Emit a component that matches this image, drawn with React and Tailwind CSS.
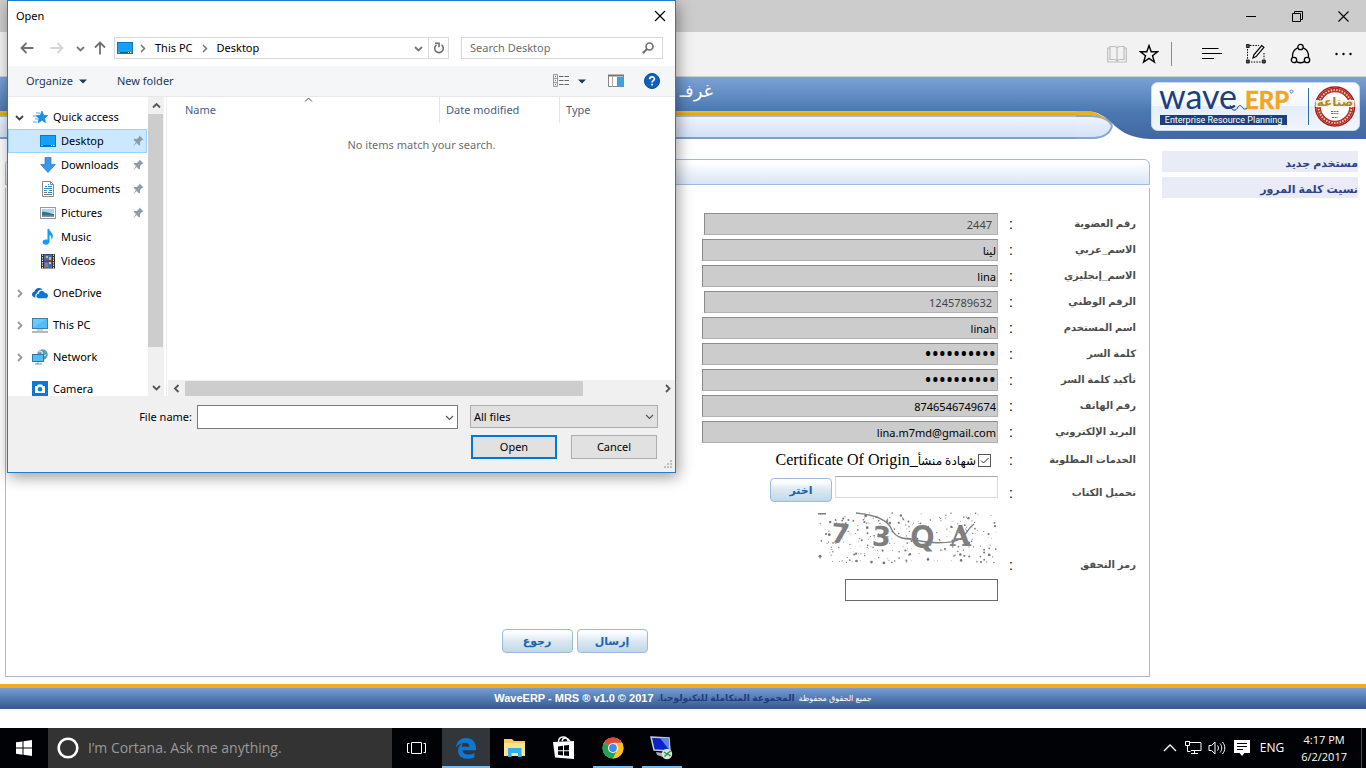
import React from "react";

const UI = "font-['Noto_Sans','DejaVu_Sans',sans-serif]";
const TASK_UI = "font-['Open_Sans','DejaVu_Sans',sans-serif]";
const ARABIC = "font-['Liberation_Sans','DejaVu_Sans',sans-serif]";

function Svg({ w = 16, h = 16, className = "", children }) {
  return (
    <svg width={w} height={h} viewBox={`0 0 ${w} ${h}`} className={`shrink-0 ${className}`} fill="none" aria-hidden="true">
      {children}
    </svg>
  );
}

/* ---------- browser frame ---------- */

function TitleBar() {
  return (
    <div className="flex h-8 items-center justify-end bg-[#cccccc]">
      <button aria-label="Minimize" className="flex h-8 w-[46px] items-center justify-center">
        <Svg w={10} h={10}><path d="M0 5.5h10" stroke="#000" /></Svg>
      </button>
      <button aria-label="Restore" className="flex h-8 w-[46px] items-center justify-center">
        <Svg w={11} h={11}><path d="M.5 2.5h8v8h-8zM2.500 2.500v-2h8v8h-2" stroke="#000" /></Svg>
      </button>
      <button aria-label="Close" className="flex h-8 w-[46px] items-center justify-center">
        <Svg w={11} h={11}><path d="M.5.5l10 10M10.500.5l-10 10" stroke="#000" strokeWidth="1.100" /></Svg>
      </button>
    </div>
  );
}

function BrowserBar() {
  return (
    <div className="flex h-[45px] items-center justify-end border-b border-[#d0d0d0] bg-[#f2f2f2] pr-[13px]">
      <button aria-label="Reading view" className="mr-3">
        <Svg w={20} h={20}>
          <path d="M10 3.500V17M10 3.500C9 2.500 7.500 2.500 6 2.500H3v13h4c1.500 0 2.500.5 3 1.500.5-1 1.500-1.500 3-1.500h4v-13h-3c-1.500 0-3 0-4 1z M3 4H.7v14h18.600V4H17" stroke="#bdbdbd" strokeWidth="1.200" />
        </Svg>
      </button>
      <button aria-label="Add to favorites" className="mr-3">
        <Svg w={20} h={20}>
          <path d="M10 1.600l2.200 6.100 6.400.1-5.100 4 1.900 6.300L10 14.400l-5.400 3.700 1.900-6.300-5.100-4 6.400-.1z" stroke="#000" strokeWidth="1.400" />
        </Svg>
      </button>
      <div className="mr-[30px] h-6 w-px bg-[#8c8c8c]" />
      <button aria-label="Hub" className="mr-6">
        <Svg w={20} h={20}><path d="M0 4.500h16.500M0 9.500h20M0 14.500h12" stroke="#000" strokeWidth="1.200" /></Svg>
      </button>
      <button aria-label="Make a web note" className="mr-6">
        <Svg w={20} h={20}>
          <path d="M4 1.500h9M1.500 5v10M18 9v6M5 18h10" stroke="#000" strokeDasharray="1.500 1.200" />
          <path d="M.3.5h3v3h-3zM.3 16h3v3h-3zM16.300 16h3v3h-3z" fill="#555" stroke="#000" strokeWidth=".8" />
          <path d="M7 14l.9-3.200L15.700 1.600l2.200 1.800-7.800 9.200z" fill="#f2f2f2" stroke="#000" strokeWidth="1.200" />
        </Svg>
      </button>
      <button aria-label="Share" className="mr-6">
        <Svg w={21} h={22}>
          <circle cx="10.500" cy="4" r="2.700" stroke="#000" strokeWidth="1.300" />
          <circle cx="4" cy="17" r="2.700" stroke="#000" strokeWidth="1.300" />
          <circle cx="17" cy="17" r="2.700" stroke="#000" strokeWidth="1.300" />
          <path d="M7.700 4.800C4 6.500 2 10 2.500 14.400M13.300 4.800c3.700 1.700 5.700 5.200 5.200 9.600M6.500 18.600c2.500 1.400 5.500 1.400 8 0" stroke="#000" strokeWidth="1.300" />
        </Svg>
      </button>
      <button aria-label="More">
        <Svg w={18} h={20}>
          <circle cx="1.500" cy="10" r="1.200" fill="#000" /><circle cx="8.500" cy="10" r="1.200" fill="#000" /><circle cx="15.500" cy="10" r="1.200" fill="#000" />
        </Svg>
      </button>
    </div>
  );
}

/* ---------- page ---------- */

function WaveLogo() {
  return (
    <svg width="209" height="49" viewBox="0 0 209 49" className="overflow-visible" role="img" aria-label="wave ERP Enterprise Resource Planning">
      <defs>
        <linearGradient id="card" x1="0" y1="0" x2="0" y2="1">
          <stop offset="0" stopColor="#fff" /><stop offset=".48" stopColor="#f4f8fd" /><stop offset=".5" stopColor="#e3edf9" /><stop offset="1" stopColor="#f1f6fd" />
        </linearGradient>
      </defs>
      <rect x=".5" y=".5" width="208" height="48" rx="6" fill="url(#card)" stroke="#c9daf0" />
      <text x="8" y="27" fontSize="34" fontFamily="Lato, sans-serif" fill="#1d3f7c">wave</text>
      <path d="M79 23c2 7 6 6 8 2 2-3 3-1 5 1 1 1.500 2 1.500 4 0" stroke="#1d3f7c" strokeWidth="1" fill="none" />
      <text x="94" y="27" fontSize="24" fontWeight="700" fontFamily="Lato, sans-serif" fill="#f2a51f" stroke="#f2a51f" strokeWidth=".5">ERP</text>
      <circle cx="140.500" cy="9.500" r="1.500" stroke="#3a6ca8" strokeWidth=".8" fill="none" />
      <rect x="9" y="33" width="127" height="10" fill="#1d3f7c" />
      <text x="72.500" y="41" fontSize="9" textAnchor="middle" fontFamily="Roboto, sans-serif" fill="#fff">Enterprise Resource Planning</text>
      <path d="M157.500 6v37" stroke="#2f6ea8" />
      <circle cx="184" cy="24.500" r="19.500" fill="#fff" stroke="#a51d1d" strokeWidth="1.500" />
      <circle cx="184" cy="24.500" r="16.500" stroke="#b5322c" strokeWidth="4.500" fill="none" />
      <circle cx="184" cy="24.500" r="16.500" stroke="#efc9a8" strokeWidth="1.800" strokeDasharray="1.500 1.300" fill="none" />
      <rect x="164.500" y="18" width="39" height="7" fill="#f8f3e6" />
      <text x="184" y="24" fontSize="12" fontWeight="700" textAnchor="middle" fontFamily="DejaVu Sans, sans-serif" fill="#a98a2c">صناعة</text>
      <path d="M180 29.500h8M180 31.500h8M181 35.500h6" stroke="#b5563a" strokeDasharray="2 .7" />
    </svg>
  );
}

function SiteHeader() {
  return (
    <header className="flex h-[63px]">
      <div className="min-w-0 flex-1">
        <div className="flex h-[34px] items-start justify-end bg-gradient-to-b from-[#7ba2d6] to-[#4c79b3] pr-[363px]">
          <span dir="rtl" className="font-['DejaVu_Sans',sans-serif] text-lg text-white">غرفـ</span>
        </div>
        <div className="h-1 bg-gradient-to-b from-[#f2c218] to-[#dba11d]" />
        <div className="h-6 border-y-2 border-t-[#9db9e0] border-b-[#7d9fcd] bg-gradient-to-b from-[#eef4fc] via-[#dfe9f8] to-[#d3e2f7]" />
      </div>
      <svg width="74" height="63" viewBox="0 0 74 63" className="shrink-0" aria-hidden="true">
        <defs>
          <linearGradient id="hb" gradientUnits="userSpaceOnUse" x1="0" y1="0" x2="0" y2="62">
            <stop offset="0" stopColor="#7ba2d6" /><stop offset=".55" stopColor="#4c79b3" /><stop offset="1" stopColor="#41679f" />
          </linearGradient>
          <linearGradient id="pill" x1="0" y1="0" x2="0" y2="1">
            <stop offset="0" stopColor="#eef4fc" /><stop offset="1" stopColor="#d3e2f7" />
          </linearGradient>
        </defs>
        <path d="M0 39h14c12 0 20 4 22 10-2 8-10 12-18 12H0" fill="url(#pill)" stroke="#86a7d4" strokeWidth="2" />
        <path d="M0 34h9c14 0 20 7 28 15-7-7-14-11-24-11H0z" fill="#e8b01b" />
        <path d="M0 0h74v62c-18-1-27-6-35-13C30 40 22 34 9 34H0z" fill="url(#hb)" />
      </svg>
      <div className="flex h-[62px] w-[216px] shrink-0 items-start bg-gradient-to-b from-[#7ba2d6] via-[#4c79b3] to-[#41679f] pt-[5px] pl-px">
        <WaveLogo />
      </div>
    </header>
  );
}

const FIELDS = [
  { id: "member", label: "رقم العضوية", value: "2447", inset: true },
  { id: "name-ar", label: "الاسم_عربي", value: "لينا" },
  { id: "name-en", label: "الاسم_إنجليزي", value: "lina" },
  { id: "national", label: "الرقم الوطني", value: "1245789632", inset: true },
  { id: "user", label: "اسم المستخدم", value: "linah" },
  { id: "pass", label: "كلمة السر", value: "lina123456", type: "password" },
  { id: "pass2", label: "تأكيد كلمة السر", value: "lina123456", type: "password" },
  { id: "phone", label: "رقم الهاتف", value: "8746546749674" },
  { id: "email", label: "البريد الإلكتروني", value: "lina.m7md@gmail.com" },
];

function Row({ id, label, children, className = "" }) {
  return (
    <div className={`grid grid-cols-[122px_16px_1fr] items-center ${className}`}>
      <label htmlFor={id} className={`${ARABIC} whitespace-nowrap text-[10px] leading-4 font-bold text-[#4d4d4d]`}>{label}</label>
      <span className={`${ARABIC} pr-px text-sm leading-4 text-black`}>:</span>
      {children}
    </div>
  );
}

function PageButton({ children, className = "w-[71px]" }) {
  return (
    <button className={`${ARABIC} ${className} h-6 rounded border border-[#9dbbe0] bg-gradient-to-b from-[#fafcfe] from-15% via-[#dbe8f1] via-50% to-[#c2d8e6] text-[11px] leading-5 font-bold text-[#1a64b0]`}>
      {children}
    </button>
  );
}

function dots() {
  const out = [];
  let s = 37;
  const next = () => {
    s = (s * 16807) % 2147483647;
    return s / 2147483647;
  };
  for (let i = 0; i < 270; i++) {
    out.push({ x: 2 + next() * 176, y: next() * 50, r: 0.4 + next() * next() * 1.2 });
  }
  return out;
}

const NOISE = dots();

function Captcha() {
  return (
    <svg width="180" height="50" viewBox="0 0 180 50" className="overflow-visible [direction:ltr]" role="img" aria-label="73QA">
      {NOISE.map((d, i) => <circle key={i} cx={d.x} cy={d.y} r={d.r} fill="#777" />)}
      <g fill="#7f7f7f" fontFamily="DejaVu Sans, sans-serif" fontWeight="700">
        <text x="13" y="30" fontSize="27" transform="rotate(6 22 20)">7</text>
        <text x="54" y="33" fontSize="27" transform="rotate(4 65 24)">3</text>
        <text x="93" y="34" fontSize="29" fontWeight="400" stroke="#7f7f7f" strokeWidth="2">Q</text>
        <text x="132" y="33" fontSize="27" fontFamily="DejaVu Serif, serif">A</text>
      </g>
      <path d="M0 .8h8M38 0c22 2 33 9 36 17 4 8 12 9 21 9 15 5 38 5 47 0 6-3 7-10 14-15" stroke="#7f7f7f" strokeWidth="1.400" fill="none" />
    </svg>
  );
}

function RegistrationForm() {
  return (
    <main className="min-w-0 flex-1 pt-[19px]">
      <div className="h-[26px] rounded-t-md border border-[#9dbbe0] bg-gradient-to-b from-white from-10% via-[#e9f0fa] via-60% to-[#d9e6f7]" />
      <form className="mt-[3px] flex flex-col border border-t-0 border-[#a6b9d8] pt-[25px] pr-[13px] pb-[23px] pl-[7px]" onSubmit={(e) => e.preventDefault()}>
        <div className="flex flex-col gap-1">
          {FIELDS.map((f) => (
            <Row key={f.id} id={f.id} label={f.label}>
              <input
                id={f.id}
                type={f.type || "text"}
                defaultValue={f.value}
                className={`${UI} h-[22px] border border-t-[#8c8c8c] border-r-[#b0b0b0] border-b-[#b0b0b0] border-l-[#8c8c8c] bg-[#cccccc] text-right outline-none ${f.type ? "text-[19px]" : "text-[11px]"} ${f.inset ? "w-[294px] px-[5px] text-[#444]" : "w-[296px] px-px text-black"}`}
              />
            </Row>
          ))}
        </div>
        <Row id="cert" label="الخدمات المطلوبة" className="mt-1 h-[26px]">
          <div className="flex items-center gap-0.5 pr-[7px]">
            <span className="relative flex h-[13px] w-[13px]">
              <input id="cert" type="checkbox" defaultChecked className="h-[13px] w-[13px] appearance-none border border-[#555] bg-white" />
              <Svg w={13} h={13} className="pointer-events-none absolute inset-0"><path d="M3 6.500l2.500 2.500L10.500 4" stroke="#333" /></Svg>
            </span>
            <label htmlFor="cert" className="font-['Liberation_Serif','DejaVu_Sans',serif] text-base leading-6 whitespace-nowrap text-black">
              <span className="text-xs">شهادة منشأ</span>_Certificate Of Origin
            </label>
          </div>
        </Row>
        <Row id="file" label="تحميل الكتاب" className="mt-[3px] h-[33px]">
          <div className="flex gap-[3px] self-start">
            <input id="file" type="text" className="h-[22px] w-[163px] border border-t-[#a8a8b4] border-[#d8dae3] bg-white outline-none" />
            <PageButton className="mt-0.5 w-[62px]">اختر</PageButton>
          </div>
        </Row>
        <Row id="code" label="رمز التحقق" className="mt-1 [&>label]:pt-4 [&>span]:pt-4">
          <div className="flex flex-col items-start gap-4">
            <Captcha />
            <input id="code" type="text" className="h-[22px] w-[153px] border border-[#6b6b6b] bg-white outline-none" />
          </div>
        </Row>
        <div className="mt-7 flex justify-center gap-1">
          <PageButton>إرسال</PageButton>
          <PageButton>رجوع</PageButton>
        </div>
      </form>
    </main>
  );
}

function Sidebar() {
  const link = `${ARABIC} block h-[21px] bg-[#e9ebf6] text-[11px] leading-6 font-bold text-[#2d458c]`;
  return (
    <nav className="mr-2 ml-3 flex w-[196px] shrink-0 flex-col gap-[5px] pt-[11px]">
      <a href="#new" className={link}>مستخدم جديد</a>
      <a href="#forgot" className={link}>نسيت كلمة المرور</a>
    </nav>
  );
}

function SiteFooter() {
  return (
    <footer dir="rtl" className={`${ARABIC} mt-[7px] flex h-[25px] items-center justify-center gap-1 border-t-4 border-[#efab22] bg-gradient-to-b from-[#769ed4] to-[#34598f] text-[11px] whitespace-nowrap text-white`}>
      <span className="text-[8px]">جميع الحقوق محفوظة</span>
      <a href="#company" className="text-[9px] font-bold text-[#233a80]">المجموعة المتكاملة للتكنولوجيا.</a>
      <span dir="ltr" className="font-bold">WaveERP - MRS ® v1.0 © 2017</span>
    </footer>
  );
}

/* ---------- file dialog ---------- */

function Chevron({ dir = "down", color = "#555", size = 9, weight = 1.5 }) {
  const d = {
    down: "M1 3l3.500 3.500L8 3",
    up: "M1 6.500L4.500 3 8 6.500",
    right: "M3 1l3.500 3.500L3 8",
    left: "M6.500 1L3 4.500 6.500 8",
  }[dir];
  return (
    <svg width={size} height={size} viewBox="0 0 9 9" fill="none" className="shrink-0" aria-hidden="true">
      <path d={d} stroke={color} strokeWidth={weight} />
    </svg>
  );
}

const ICONS = {
  star: (
    <Svg>
      <path d="M10 2l1.600 4.300 4.200.2-3.200 2.800.9 4.500L10 11.300l-4 2.600 1-4.500-3-2.900 4.200-.2z" fill="#1e90e0" stroke="#1676c4" strokeWidth=".6" />
      <path d="M4 4h4M1 7h4M3 10h3M1 13h4" stroke="#4aaef0" />
    </Svg>
  ),
  desktop: (
    <Svg>
      <rect x=".5" y="2.500" width="15" height="11" fill="#14a0ff" stroke="#0d78bd" />
      <path d="M1 12.500h14" stroke="#075e9c" /><path d="M11 12.500h1M13 12.500h1.500M1.500 12.500h1" stroke="#fff" />
    </Svg>
  ),
  downloads: (
    <Svg><path d="M5 .5h6v7h4.300L8 15.500.7 7.500H5z" fill="#3d97e6" stroke="#2b7fd0" strokeWidth=".8" /></Svg>
  ),
  documents: (
    <Svg>
      <path d="M2.500.5h8l3 3v12h-11z" fill="#fff" stroke="#8a8a8a" /><path d="M10.500.5v3h3" stroke="#8a8a8a" />
      <path d="M5 5.500h2M8 3.500h1M8 5.500h4M4 7.500h8M4 9.500h3M9 9.500h3M8 11.500h4" stroke="#2a8bd8" /><path d="M4 11.500h3M4 13.500h8" stroke="#777" />
    </Svg>
  ),
  pictures: (
    <Svg>
      <rect x=".5" y="2.500" width="15" height="11" fill="#fff" stroke="#9a9a9a" />
      <path d="M2 4h12v4H2z" fill="#a9d3f5" /><path d="M2 7c3-1 6 1 12 2v3H2z" fill="#3f6f7c" /><path d="M2 10.500h12V12H2z" fill="#6f9fc0" />
    </Svg>
  ),
  music: (
    <Svg>
      <path d="M7.500 0h1.700c.3 2.600 4 3.800 3.700 7.500-.2 1.500-.8 2.500-1.600 3.500.5-2.500.2-4-1.800-5v6.500c0 2-1.600 3.200-3.700 3.200S2.500 14.500 2.500 13s1.400-2.600 3.400-2.600c.6 0 1.200.1 1.600.3z" fill="#129cf3" />
    </Svg>
  ),
  videos: (
    <Svg>
      <rect x="1" y="1" width="14" height="14.500" fill="#333" />
      <rect x="4" y="1.500" width="8" height="6" fill="#3c70c8" /><rect x="4" y="8.500" width="8" height="6.500" fill="#3c70c8" />
      <path d="M4 6.500h8v1H4z" fill="#b5462c" /><path d="M6 3h2v2H6zM9 4h2v3H9z" fill="#e8b93a" /><path d="M5 10h3v4H5z" fill="#d2692d" /><path d="M9 9h2v2H9z" fill="#e5cf4c" />
      <path d="M2.500 1.500v14M13.500 1.500v14" stroke="#ddd" strokeDasharray="1.500 1" />
    </Svg>
  ),
  onedrive: (
    <Svg>
      <path d="M3.500 12.500C1.500 12.500 0 11.300 0 9.600 0 8 1 6.900 2.500 6.600 3 4 5 2.700 7.200 2.900c1.500.1 2.600.8 3.300 1.900C7.500 4.300 5.600 6 5.200 8.200 3.600 8.700 3 10.600 3.500 12.500z" fill="#0a6fc9" />
      <path d="M6.700 13.300c-2.700 0-3.300-4 .1-4.500C7 5.300 11.500 4.500 12.800 7.900c2-.1 3.200 1.100 3.200 2.800 0 1.500-1.100 2.600-2.500 2.600z" fill="#0a78d8" />
    </Svg>
  ),
  pc: (
    <Svg>
      <rect x=".5" y="1.500" width="15" height="10" fill="#4fbdfb" stroke="#3f7fa6" /><path d="M1 11V2h13z" fill="#7dd0ff" opacity=".6" />
      <path d="M5 13h6" stroke="#8fa3b0" /><path d="M0 15h16" stroke="#7d97a8" strokeWidth="1.300" />
    </Svg>
  ),
  network: (
    <Svg>
      <circle cx="10.500" cy="5.500" r="5.300" fill="#5f9db5" /><path d="M7 3c2-2 4 0 3 2s2 2 4 1" stroke="#cfe8f0" strokeWidth="1.300" />
      <rect x=".5" y="5.500" width="11" height="7" fill="#4fbdfb" stroke="#2e78a8" /><path d="M3 15h7M6 13v2" stroke="#7d97a8" />
    </Svg>
  ),
  camera: (
    <Svg>
      <rect width="16" height="16" fill="#0a78d8" /><path d="M3 5h2l1-1.500h4L11 5h2v7H3z" fill="#fff" /><circle cx="8" cy="8.300" r="2.200" fill="#0a78d8" />
    </Svg>
  ),
};

function Pin() {
  return (
    <Svg w={12} h={12}><path d="M7.500.5l4 4-1.500.5-2 2 .2 2.500-1 1-2.500-2.500L1 11.500 4 7 1.500 4.800l1-1L5 4l2-2z" fill="#8f9ba6" /></Svg>
  );
}

function TreeItem({ icon, text, pinned, selected }) {
  return (
    <li className={`flex h-6 items-center border pr-0.5 pl-[31px] ${selected ? "border-[#99d1ff] bg-[#cce8ff]" : "border-transparent"}`}>
      {ICONS[icon]}
      <span className="ml-[5px] flex-1">{text}</span>
      {pinned && <Pin />}
    </li>
  );
}

function TreeGroup({ icon, text, arrow, children }) {
  return (
    <li>
      <div className="flex h-6 items-center pl-[7px]">
        <span className="flex w-[17px]">{arrow && <Chevron dir={arrow} color={arrow === "down" ? "#404040" : "#999"} weight={1.800} />}</span>
        {ICONS[icon]}
        <span className="ml-[5px]">{text}</span>
      </div>
      {children}
    </li>
  );
}

function NavigationTree() {
  return (
    <div className="flex w-[156px] shrink-0">
      <ul className="flex min-w-0 flex-1 flex-col gap-2 overflow-hidden pt-2 pr-px">
        <TreeGroup icon="star" text="Quick access" arrow="down">
          <ul>
            <TreeItem icon="desktop" text="Desktop" pinned selected />
            <TreeItem icon="downloads" text="Downloads" pinned />
            <TreeItem icon="documents" text="Documents" pinned />
            <TreeItem icon="pictures" text="Pictures" pinned />
            <TreeItem icon="music" text="Music" />
            <TreeItem icon="videos" text="Videos" />
          </ul>
        </TreeGroup>
        <TreeGroup icon="onedrive" text="OneDrive" arrow="right" />
        <TreeGroup icon="pc" text="This PC" arrow="right" />
        <TreeGroup icon="network" text="Network" arrow="right" />
        <TreeGroup icon="camera" text="Camera" />
      </ul>
      <div className="flex w-4 flex-col bg-[#f0f0f0]">
        <div className="flex h-[17px] items-center justify-center"><Chevron dir="up" weight={1.800} /></div>
        <div className="mr-px h-[233px] bg-[#cdcdcd]" />
        <div className="mt-auto flex h-[17px] items-center justify-center"><Chevron weight={1.800} /></div>
      </div>
    </div>
  );
}

function FileList() {
  return (
    <div className="ml-0.5 flex min-w-0 flex-1 flex-col border-l border-[#ececec] pl-px">
      <div className="flex h-[26px] text-[#4c607a]">
        <div className="relative flex flex-1 items-center border-r border-[#e5e5e5] pl-[17px]">
          Name
          <span className="absolute top-[-2px] left-1/2 flex"><Chevron dir="up" weight={1} /></span>
        </div>
        <div className="flex w-[120px] items-center border-r border-[#e5e5e5] pl-1.5">Date modified</div>
        <div className="flex w-[115px] items-center pl-1.5">Type</div>
      </div>
      <p className="flex-1 pt-3.5 text-center text-[#6d6d6d]">No items match your search.</p>
      <div className="flex h-4 items-center bg-[#f0f0f0]">
        <span className="flex w-[17px] justify-center"><Chevron dir="left" weight={1.800} /></span>
        <span className="h-[15px] w-[398px] bg-[#cdcdcd]" />
        <span className="ml-auto flex w-4 justify-center"><Chevron dir="right" weight={1.800} /></span>
      </div>
    </div>
  );
}

function AddressRow() {
  return (
    <div className="flex h-9 items-center px-3">
      <button aria-label="Back" className="mr-4">
        <Svg w={14} h={14}><path d="M13.500 7H1.500M6.500 2l-5 5 5 5" stroke="#6f6f6f" strokeWidth="1.800" /></Svg>
      </button>
      <button aria-label="Forward" className="mr-3">
        <Svg w={14} h={14}><path d="M.5 7h12M7.500 2l5 5-5 5" stroke="#d5d5d5" strokeWidth="1.800" /></Svg>
      </button>
      <button aria-label="Recent locations" className="mr-2"><Chevron color="#777" weight={1.800} /></button>
      <button aria-label="Up" className="mr-[7px]">
        <Svg w={14} h={14}><path d="M7 13.500V1.500M2 6.500l5-5 5 5" stroke="#6f6f6f" strokeWidth="1.800" /></Svg>
      </button>
      <div className="flex h-[22px] flex-1 items-center border border-[#d9d9d9] pl-0.5">
        {ICONS.desktop}
        <span className="ml-[5px] flex"><Chevron dir="right" color="#777" /></span>
        <span className="ml-2">This PC</span>
        <span className="ml-[7px] flex"><Chevron dir="right" color="#777" /></span>
        <span className="ml-2">Desktop</span>
        <span className="mr-[5px] ml-auto flex"><Chevron color="#777" weight={1.800} /></span>
        <button aria-label="Refresh" className="flex h-5 w-5 items-center justify-center border-l border-[#d9d9d9]">
          <Svg w={12} h={12}><path d="M8.500 2.800A4.300 4.300 0 1 1 3.500 2.800M2 1.300h4v4" stroke="#6f6f6f" strokeWidth="1.600" /></Svg>
        </button>
      </div>
      <div className="ml-3 flex h-[22px] w-[202px] items-center border border-[#d9d9d9] pr-2 pl-2">
        <input aria-label="Search Desktop" placeholder="Search Desktop" className="min-w-0 flex-1 bg-transparent outline-none placeholder:text-[#6d6d6d]" />
        <Svg w={12} h={12}><circle cx="7.500" cy="4.500" r="3.500" stroke="#6f6f6f" strokeWidth="1.600" /><path d="M5 7L.8 11.200" stroke="#6f6f6f" strokeWidth="2" /></Svg>
      </div>
    </div>
  );
}

function DialogToolbar() {
  return (
    <div className="flex h-[31px] items-center border-b border-[#e8e8e8] bg-[#f5f6f7] pr-[15px] pl-[18px] text-[#1e395b]">
      <button className="flex items-center gap-1.5">
        Organize
        <Svg w={8} h={5}><path d="M0 .5h8L4 4.500z" fill="#1e395b" /></Svg>
      </button>
      <button className="ml-[30px]">New folder</button>
      <button aria-label="Change your view" className="ml-auto flex items-center gap-2">
        <Svg w={17} h={14}>
          <path d="M.5.5h4v12h-4zM.5 4.500h4M.5 8.500h4" stroke="#999" />
          <path d="M2 2.500h1" stroke="#555" /><path d="M2 6.500h1" stroke="#2a8bd8" /><path d="M2 10.500h1" stroke="#d33" />
          <path d="M6 2.500h10M6 6.500h10M6 10.500h10" stroke="#666" strokeDasharray="4.500 1" />
        </Svg>
        <Svg w={8} h={5}><path d="M0 .5h8L4 4.500z" fill="#1e395b" /></Svg>
      </button>
      <button aria-label="Preview pane" className="ml-[22px]">
        <Svg w={17} h={14}>
          <rect x=".5" y="1.500" width="15" height="11" fill="#fff" stroke="#888" /><path d="M0 1.500h16" stroke="#777" strokeWidth="2" />
          <path d="M4.500 2v11" stroke="#aaa" /><rect x="9" y="3" width="6" height="9" fill="#3f9fe8" />
        </Svg>
      </button>
      <button aria-label="Help" className="ml-[19px]">
        <Svg>
          <circle cx="8" cy="8" r="7.500" fill="#0a62c0" stroke="#0b4c94" />
          <path d="M5.700 6.200c0-3 4.700-3 4.700-.3 0 1.900-2.300 1.700-2.300 3.700" stroke="#fff" strokeWidth="1.700" /><rect x="7.200" y="10.700" width="1.800" height="1.800" fill="#fff" />
        </Svg>
      </button>
    </div>
  );
}

function OpenDialog() {
  return (
    <section
      role="dialog"
      aria-label="Open"
      className={`${UI} absolute top-0 left-[7px] z-10 flex w-[669px] flex-col border border-[#1a7fd4] bg-white text-[11px] leading-4 text-black shadow-[2px_4px_14px_rgba(0,0,0,0.4)]`}
    >
      <div className="flex h-[29px] items-center justify-between pr-2 pl-2">
        <h1>Open</h1>
        <button aria-label="Close dialog">
          <Svg w={14} h={14}><path d="M2 2l10 10M12 2L2 12" stroke="#000" strokeWidth="1.200" /></Svg>
        </button>
      </div>
      <AddressRow />
      <DialogToolbar />
      <div className="flex h-[299px]">
        <NavigationTree />
        <FileList />
      </div>
      <div className="relative flex flex-col gap-[6px] bg-[#f0f0f0] pt-[9px] pr-[17px] pb-[13px]">
        <div className="flex justify-end">
          <label htmlFor="filename" className="mr-[5px] leading-6">File name:</label>
          <div className="relative flex h-6 w-[261px]">
            <input id="filename" type="text" className="w-full border border-[#7a7a7a] bg-white px-1 outline-none" />
            <span className="pointer-events-none absolute top-2 right-1 flex"><Chevron weight={1.200} /></span>
          </div>
          <div className="relative ml-3 flex h-[23px] w-[188px]">
            <select aria-label="File type" className="w-full appearance-none border border-[#adadad] bg-[#e1e1e1] px-[3px] outline-none">
              <option>All files</option>
            </select>
            <span className="pointer-events-none absolute top-[7px] right-1 flex"><Chevron weight={1.200} /></span>
          </div>
        </div>
        <div className="flex justify-end gap-3.5 pr-px">
          <button className="h-6 w-[86px] border-2 border-[#0078d7] bg-[#e1e1e1]">Open</button>
          <button className="h-6 w-[86px] border border-[#adadad] bg-[#e1e1e1]">Cancel</button>
        </div>
        <svg width="10" height="10" viewBox="0 0 10 10" className="absolute right-0.5 bottom-0.5" aria-hidden="true">
          <path d="M7 1h2M4 4h2M7 4h2M1 7h2M4 7h2M7 7h2" stroke="#bfbfbf" strokeWidth="2" />
        </svg>
      </div>
    </section>
  );
}

/* ---------- taskbar ---------- */

function Task({ label, active, running, children, className = "w-[49px]" }) {
  return (
    <button aria-label={label} className={`flex h-10 flex-col items-center ${className} ${active ? "bg-[#32363a]" : ""}`}>
      <span className="flex h-[38px] items-center pt-0.5">{children}</span>
      {(active || running) && <span className={`h-0.5 bg-[#76b9ed] ${active ? "w-full" : "w-10"}`} />}
    </button>
  );
}

function Taskbar() {
  return (
    <div className={`${TASK_UI} mt-auto flex h-10 items-center bg-[#000206] text-[11px] text-white`}>
      <Task label="Start" className="w-12">
        <Svg><path d="M0 2.300L6.500 1.400v6.200H0zM7.500 1.200L16 0v7.600H7.500zM0 8.500h6.500v6.200L0 13.800zM7.500 8.500H16V16l-8.500-1.200z" fill="#fff" /></Svg>
      </Task>
      <div className="flex h-10 w-[344px] items-center bg-[#333333] pl-[9px]">
        <Svg w={22} h={22}><circle cx="11" cy="11" r="9.300" stroke="#fff" strokeWidth="2.600" /></Svg>
        <input aria-label="Search" placeholder="I’m Cortana. Ask me anything." className="ml-[9px] min-w-0 flex-1 bg-transparent text-sm outline-none placeholder:text-[#999]" />
      </div>
      <Task label="Task view" className="w-[50px]">
        <Svg w={20} h={14}><path d="M4.500 1.500h10v11h-10zM2.500 2.500h-2v9h2M16.500 2.500h2v9h-2" stroke="#fff" /></Svg>
      </Task>
      <Task label="Edge" active className="w-12">
        <Svg w={22} h={22}>
          <path d="M1 10.200C1.700 4.400 5.800 1 11 1c6 0 10 4 10 10v2.300H7.600c.1 3 2.700 4.300 5.600 4.300 2.300 0 4.300-.6 6.200-1.700v4.300c-2 1-4.500 1.600-7 1.600-5.500 0-9.300-3-9.300-8 0-3.500 2-6.300 5.200-7.700-1 1-1.400 2-1.600 3.600h7.700c0-2.500-1.300-4-4-4-3.500 0-6.700 1.600-9.400 4.500z" fill="#0a78d7" />
        </Svg>
      </Task>
      <Task label="File Explorer">
        <Svg w={22} h={20}>
          <path d="M0 1h8l2 2h11v15H0z" fill="#f7cd57" /><path d="M0 5h21v13H0z" fill="#fde28f" /><path d="M4 10h13.500v9H14v-4H7.500v4H4z" fill="#2fb0ec" />
        </Svg>
      </Task>
      <Task label="Store">
        <Svg w={22} h={24}>
          <path d="M0 6l21-1v18L2 21.500z" fill="#fff" /><path d="M5.500 6C5.500-.5 14-.5 15 5M9 5c1-4 5-4 8 0" stroke="#fff" strokeWidth="1.300" />
          <path d="M5 10.500l5-.7v4.500H5zM11 9.600l5-.7v5.400h-5zM5 15.300h5v4.200l-5-.7zM11 15.300h5V20l-5-.5z" fill="#000206" />
        </Svg>
      </Task>
      <Task label="Chrome" running>
        <Svg w={22} h={22}>
          <circle cx="11" cy="11" r="10.500" fill="#fbc116" />
          <path d="M11 11L1.900 5.800A10.500 10.500 0 0 1 20.100 5.800z" fill="#dd4b3e" /><path d="M1.900 5.800A10.500 10.500 0 0 0 11 21.500L15 13 11 11z" fill="#1fa35c" />
          <path d="M11 5.800h9.100a10.500 10.500 0 0 1-9.100 15.700l4.500-8z" fill="#fbc116" />
          <circle cx="11" cy="11" r="5" fill="#fff" /><circle cx="11" cy="11" r="3.900" fill="#4787ee" />
        </Svg>
      </Task>
      <Task label="Remote Desktop" running>
        <Svg w={24} h={24}>
          <path d="M1 1l18 1 1 13-16-1z" fill="#0a24c8" stroke="#c5c9d4" strokeWidth="1.500" /><path d="M10 2l8.500.6.800 11.400z" fill="#5f86ea" />
          <path d="M6 16l7 1v4l-6-2z" fill="#a9adb5" /><circle cx="17" cy="18" r="5.200" fill="#dedfe2" /><path d="M14 16l3 2-2.500 2.500M20.500 15L17.500 17.500l3 2.500" stroke="#2c9a3d" strokeWidth="1.500" />
        </Svg>
      </Task>
      <div className="ml-auto flex h-10 items-center border-r border-[#4a4a4a] pr-3.5">
        <Svg w={14} h={14}><path d="M1 10l6-6 6 6" stroke="#fff" strokeWidth="1.300" /></Svg>
        <Svg w={17} h={16} className="ml-2"><path d="M5 2.500h11v8H6M9.500 10.500v3M6 13.500h7M.5 1.500h4v4h-4zM2.500 5.500v6h3" stroke="#fff" /></Svg>
        <Svg w={18} h={16} className="ml-1.5"><path d="M1 5.500h2.500L7 2v12L3.500 10.500H1zM9.500 5.500c1.200 1.500 1.200 3.500 0 5M12 3.500c2.300 2.700 2.300 6.300 0 9M14.500 2c3 3.500 3 8.500 0 12" stroke="#fff" /></Svg>
        <Svg w={16} h={16} className="ml-2"><path d="M0 0h16v13h-5.500L8 16l-2.500-3H0z" fill="#fff" /><path d="M3 3.500h10M3 6.500h10M3 9.500h6" stroke="#000206" /></Svg>
        <span className="ml-2.5 text-xs">ENG</span>
        <div className="ml-[17px] text-center leading-[17px]">
          <div>4:17 PM</div>
          <div>6/2/2017</div>
        </div>
      </div>
      <div className="w-1" />
    </div>
  );
}

export default function App() {
  return (
    <div className="relative flex min-h-screen flex-col bg-white">
      <TitleBar />
      <BrowserBar />
      <SiteHeader />
      <div dir="rtl" className="flex pl-[5px]">
        <Sidebar />
        <RegistrationForm />
      </div>
      <SiteFooter />
      <OpenDialog />
      <Taskbar />
    </div>
  );
}
